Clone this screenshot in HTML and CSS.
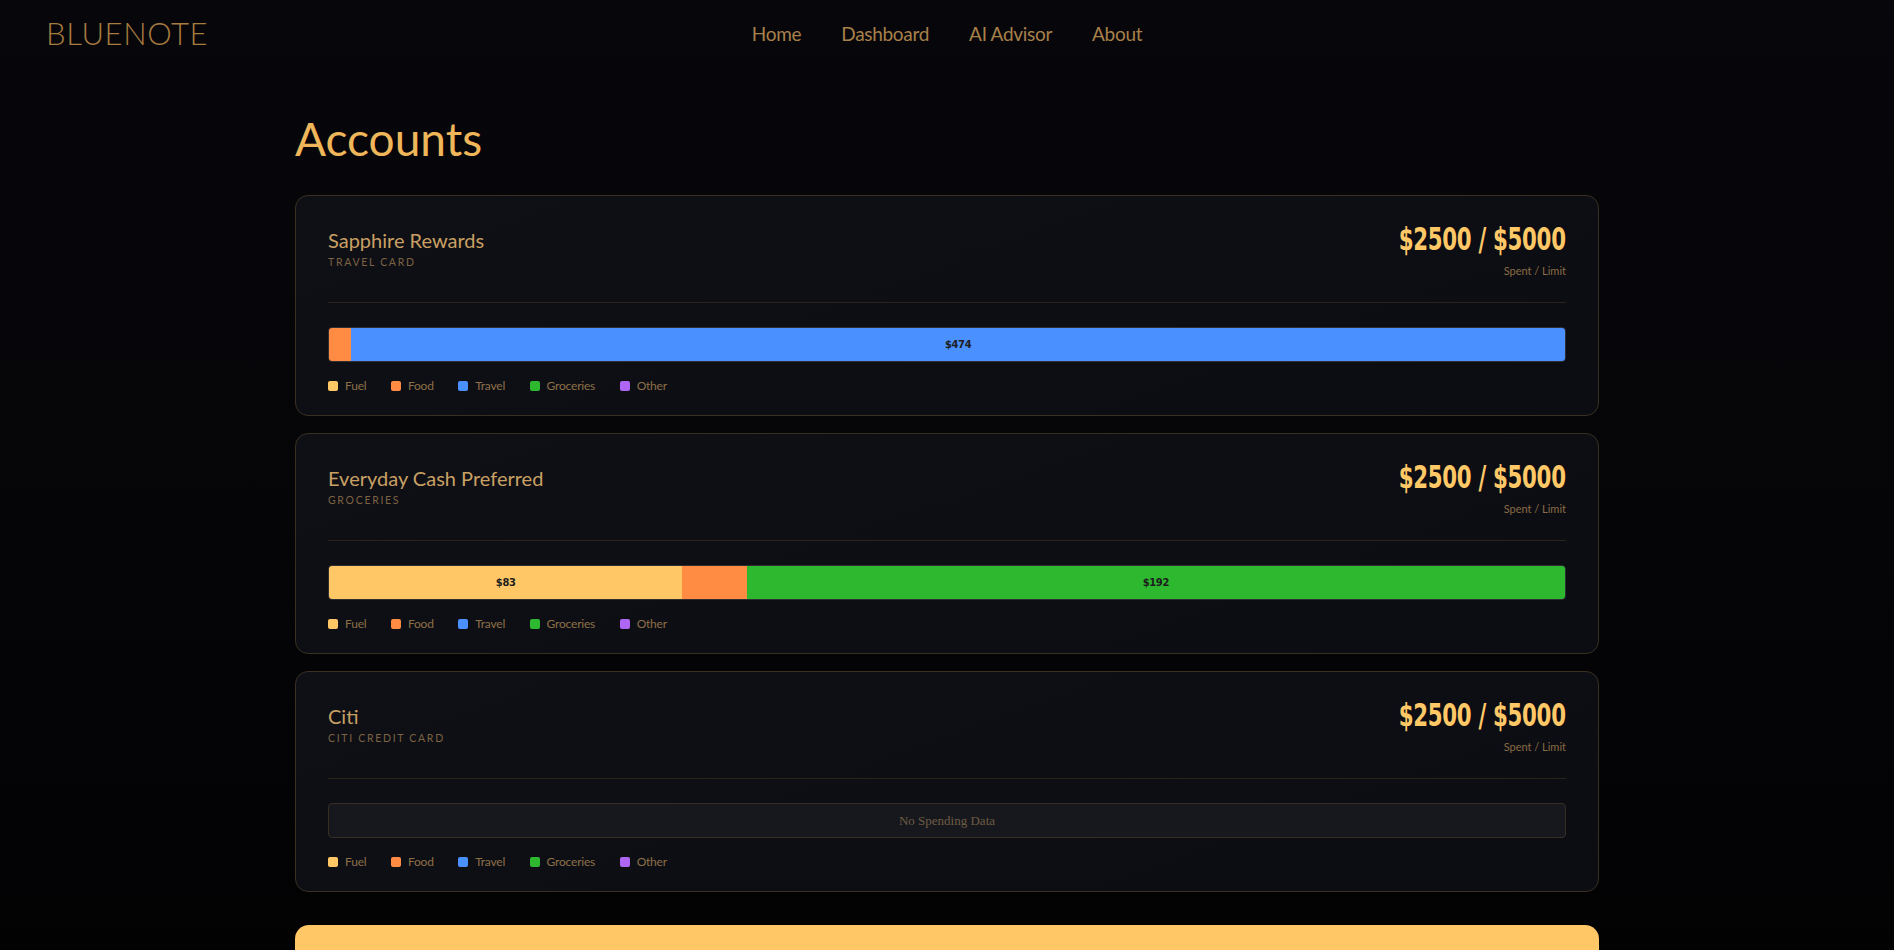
FILE: index.html
```html
<!DOCTYPE html>
<html lang="en">
<head>
<meta charset="utf-8">
<title>Bluenote - Accounts</title>
<link rel="stylesheet" href="styles.css">
</head>
<body>
<header class="topbar">
  <div class="logo">BLUENOTE</div>
  <nav class="nav">
    <a href="#">Home</a>
    <a href="#">Dashboard</a>
    <a href="#">AI Advisor</a>
    <a href="#">About</a>
  </nav>
  <div class="spacer"></div>
</header>

<main class="container">
  <h1 class="page-title">Accounts</h1>

  <section class="card">
    <div class="card-head">
      <div class="card-id">
        <div class="card-name">Sapphire Rewards</div>
        <div class="card-type">Travel Card</div>
      </div>
      <div class="card-amount">
        <div class="amount">$2500 / $5000</div>
        <div class="amount-label">Spent / Limit</div>
      </div>
    </div>
    <div class="bar">
      <div class="seg food" style="width:1.8%"></div>
      <div class="seg travel" style="width:98.2%">$474</div>
    </div>
    <ul class="legend">
      <li><span class="dot fuel"></span>Fuel</li>
      <li><span class="dot food"></span>Food</li>
      <li><span class="dot travel"></span>Travel</li>
      <li><span class="dot groceries"></span>Groceries</li>
      <li><span class="dot other"></span>Other</li>
    </ul>
  </section>

  <section class="card">
    <div class="card-head">
      <div class="card-id">
        <div class="card-name">Everyday Cash Preferred</div>
        <div class="card-type">Groceries</div>
      </div>
      <div class="card-amount">
        <div class="amount">$2500 / $5000</div>
        <div class="amount-label">Spent / Limit</div>
      </div>
    </div>
    <div class="bar">
      <div class="seg fuel" style="width:28.6%">$83</div>
      <div class="seg food" style="width:5.2%"></div>
      <div class="seg groceries" style="width:66.2%">$192</div>
    </div>
    <ul class="legend">
      <li><span class="dot fuel"></span>Fuel</li>
      <li><span class="dot food"></span>Food</li>
      <li><span class="dot travel"></span>Travel</li>
      <li><span class="dot groceries"></span>Groceries</li>
      <li><span class="dot other"></span>Other</li>
    </ul>
  </section>

  <section class="card">
    <div class="card-head">
      <div class="card-id">
        <div class="card-name">Citi</div>
        <div class="card-type">Citi Credit Card</div>
      </div>
      <div class="card-amount">
        <div class="amount">$2500 / $5000</div>
        <div class="amount-label">Spent / Limit</div>
      </div>
    </div>
    <div class="bar empty">No Spending Data</div>
    <ul class="legend">
      <li><span class="dot fuel"></span>Fuel</li>
      <li><span class="dot food"></span>Food</li>
      <li><span class="dot travel"></span>Travel</li>
      <li><span class="dot groceries"></span>Groceries</li>
      <li><span class="dot other"></span>Other</li>
    </ul>
  </section>

  <section class="promo"></section>
</main>
</body>
</html>
```

FILE: styles.css
```css
* { box-sizing: border-box; }

html, body {
  margin: 0;
  padding: 0;
}

body {
  min-height: 100vh;
  background: linear-gradient(180deg, #07070b 0%, #050508 50%, #020203 100%);
  font-family: "Lato", "Open Sans", sans-serif;
  color: #c9a063;
}

.topbar {
  display: grid;
  grid-template-columns: 1fr auto 1fr;
  align-items: center;
  height: 78px;
  padding: 0 46px;
}

.logo {
  font-size: 31px;
  font-weight: 300;
  letter-spacing: 0.6px;
  color: #a67b3f;
  line-height: 1;
  margin-bottom: 12px;
}

.nav {
  display: flex;
  gap: 40px;
  margin-bottom: 12px;
}

.nav a {
  color: #a8804a;
  text-decoration: none;
  font-size: 19px;
  letter-spacing: -0.3px;
  line-height: 1;
}

.container {
  width: 1304px;
  margin: 0 auto;
}

.page-title {
  margin: 33px 0 29px;
  font-size: 46px;
  font-weight: 400;
  line-height: 55px;
  color: #efb65a;
}

.card {
  background: linear-gradient(160deg, #0f1016 0%, #0c0d12 100%);
  border: 1px solid #3a3021;
  border-radius: 13px;
  padding: 24px 32px 21px;
  margin-bottom: 17px;
}

.card-head {
  display: flex;
  justify-content: space-between;
  align-items: flex-start;
  padding-bottom: 24px;
  border-bottom: 1px solid #2a2319;
}

.card-name {
  margin-top: 6px;
  font-size: 20px;
  line-height: 28px;
  color: #c9a063;
}

.card-type {
  font-size: 10.5px;
  line-height: 16px;
  letter-spacing: 1.7px;
  text-transform: uppercase;
  color: #7c6343;
}

.card-amount {
  text-align: right;
}

.amount {
  display: inline-block;
  font-family: "DejaVu Sans Condensed", "DejaVu Sans", sans-serif;
  font-weight: 700;
  font-size: 32px;
  line-height: 38px;
  letter-spacing: -0.4px;
  color: #ffc867;
  transform: scaleX(0.74);
  transform-origin: right center;
}

.amount-label {
  margin-top: 6px;
  font-size: 11px;
  line-height: 14px;
  color: #8a6c45;
}

.bar {
  display: flex;
  height: 35px;
  margin-top: 24px;
  border: 1px solid #2f2f33;
  border-radius: 4px;
  overflow: hidden;
}

.seg {
  height: 100%;
  display: flex;
  align-items: center;
  justify-content: center;
  font-family: "DejaVu Sans Condensed", "DejaVu Sans", sans-serif;
  font-weight: 700;
  font-size: 11px;
  letter-spacing: -0.3px;
  color: #1d1d1d;
}

.bar.empty {
  align-items: center;
  justify-content: center;
  background: #17181d;
  border-color: #362e25;
  font-family: "Liberation Serif", serif;
  font-size: 13px;
  color: #6e5c45;
}

.fuel { background: #ffc766; }
.food { background: #ff8c42; }
.travel { background: #4a91ff; }
.groceries { background: #2eb82f; }
.other { background: #b066f5; }

.legend {
  display: flex;
  gap: 24.5px;
  list-style: none;
  margin: 16px 0 0;
  padding: 0;
  font-size: 12px;
  line-height: 16px;
  letter-spacing: -0.2px;
  color: #8d7048;
}

.legend li {
  display: flex;
  align-items: center;
  gap: 7px;
}

.dot {
  width: 10px;
  height: 10px;
  border-radius: 2px;
}

.promo {
  height: 80px;
  margin-top: 33px;
  background: #ffc766;
  border-radius: 14px 14px 0 0;
}
```
